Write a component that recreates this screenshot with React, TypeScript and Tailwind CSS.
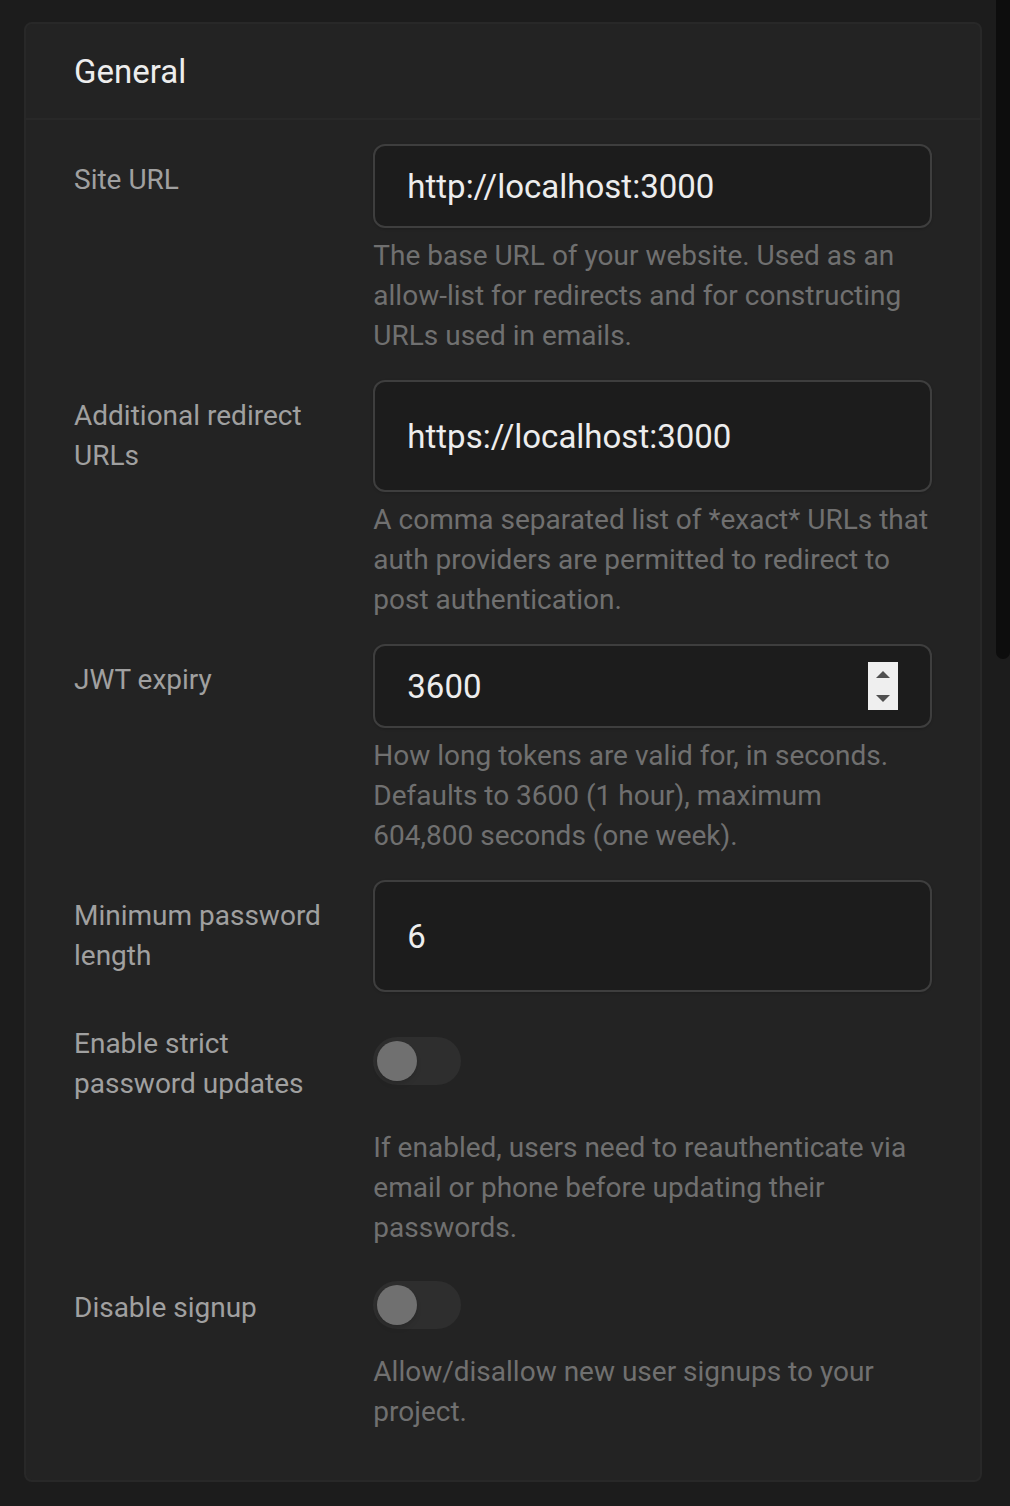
import { useState, type ReactNode } from 'react'

const fieldClass =
  'block w-full rounded-xl border-2 border-[#3e3e3e] bg-[#1c1c1c] px-8 text-[33px] text-[#ededed] shadow-sm outline-none focus:border-[#707070]'

function Label({ id, children, className }: { id: string; children: ReactNode; className: string }) {
  return (
    <label htmlFor={id} className={`col-span-4 self-start text-[#a0a0a0] ${className}`}>
      {children}
    </label>
  )
}

function Row({ children }: { children: ReactNode }) {
  return <div className="grid grid-cols-12 gap-x-10">{children}</div>
}

function Field(props: { id: string; label: string; hint?: string; children: ReactNode }) {
  return (
    <Row>
      <Label id={props.id} className="pt-4">
        {props.label}
      </Label>
      <div className="col-span-8 flex flex-col gap-2">
        {props.children}
        {props.hint && <p>{props.hint}</p>}
      </div>
    </Row>
  )
}

function Switch({ id }: { id: string }) {
  return (
    <input
      id={id}
      type="checkbox"
      role="switch"
      className="flex h-12 w-[88px] cursor-pointer appearance-none items-center rounded-full bg-[#2e2e2e] px-1 before:size-10 before:rounded-full before:bg-[#707070] before:shadow-md before:transition-transform checked:bg-[#3ecf8e] checked:before:translate-x-10 checked:before:bg-white"
    />
  )
}

function NumberStepper({ id }: { id: string }) {
  const [value, setValue] = useState(3600)
  return (
    <div className="relative">
      <input
        id={id}
        type="number"
        value={value}
        onChange={(e) => setValue(Number(e.target.value))}
        className={`${fieldClass} h-[84px] [appearance:textfield] [&::-webkit-inner-spin-button]:appearance-none`}
      />
      <div className="absolute top-1/2 right-[34px] flex h-12 w-[30px] -translate-y-1/2 flex-col bg-[#efefef] text-[#505050]">
        <button type="button" aria-label="Increase" onClick={() => setValue(value + 1)} className="flex flex-1 items-center justify-center">
          <svg viewBox="0 0 14 7" className="h-[7px] w-3.5" fill="currentColor">
            <path d="M0 7 7 0l7 7z" />
          </svg>
        </button>
        <button type="button" aria-label="Decrease" onClick={() => setValue(value - 1)} className="flex flex-1 items-center justify-center">
          <svg viewBox="0 0 14 7" className="h-[7px] w-3.5" fill="currentColor">
            <path d="M0 0h14L7 7z" />
          </svg>
        </button>
      </div>
    </div>
  )
}

export default function App() {
  return (
    <div className="flex min-h-screen bg-[#1c1c1c] font-[Roboto,sans-serif] text-[28px] leading-10 text-[#707070]">
      <main className="flex-1 py-[22px] pr-3.5 pl-6">
        <form className="rounded-lg border-2 border-[#282828] bg-[#232323]">
          <header className="border-b-2 border-[#282828] px-12 pt-7 pb-[26px]">
            <h1 className="text-[33px] leading-10 text-[#ededed]">General</h1>
          </header>
          <div className="flex flex-col gap-6 px-12 pt-6 pb-12">
            <Field
              id="site-url"
              label="Site URL"
              hint="The base URL of your website. Used as an allow-list for redirects and for constructing URLs used in emails."
            >
              <input id="site-url" type="text" defaultValue="http://localhost:3000" className={`${fieldClass} h-[84px]`} />
            </Field>
            <Field
              id="redirect-urls"
              label="Additional redirect URLs"
              hint="A comma separated list of *exact* URLs that auth providers are permitted to redirect to post authentication."
            >
              <input id="redirect-urls" type="text" defaultValue="https://localhost:3000" className={`${fieldClass} h-28`} />
            </Field>
            <Field
              id="jwt-expiry"
              label="JWT expiry"
              hint={'How long tokens are valid for, in seconds. Defaults to 3600 (1 hour), maximum 604,800\u00a0seconds (one week).'}
            >
              <NumberStepper id="jwt-expiry" />
            </Field>
            <Field id="password-length" label="Minimum password length">
              <input id="password-length" type="text" inputMode="numeric" defaultValue="6" className={`${fieldClass} h-28`} />
            </Field>
            <Row>
              <Label id="strict-updates" className="pt-2">
                Enable strict password updates
              </Label>
              <div className="col-span-8 flex flex-col gap-[43px] pt-[21px]">
                <Switch id="strict-updates" />
                <p>If enabled, users need to reauthenticate via email or phone before updating their passwords.</p>
              </div>
            </Row>
            <Row>
              <Label id="disable-signup" className="pt-4">
                Disable signup
              </Label>
              <div className="col-span-8 flex flex-col gap-[23px] pt-[9px]">
                <Switch id="disable-signup" />
                <p>Allow/disallow new user signups to your project.</p>
              </div>
            </Row>
          </div>
        </form>
      </main>
      <aside aria-hidden="true" className="w-3.5">
        <div className="h-[659px] rounded-b-full bg-[#0d0d0d]" />
      </aside>
    </div>
  )
}
